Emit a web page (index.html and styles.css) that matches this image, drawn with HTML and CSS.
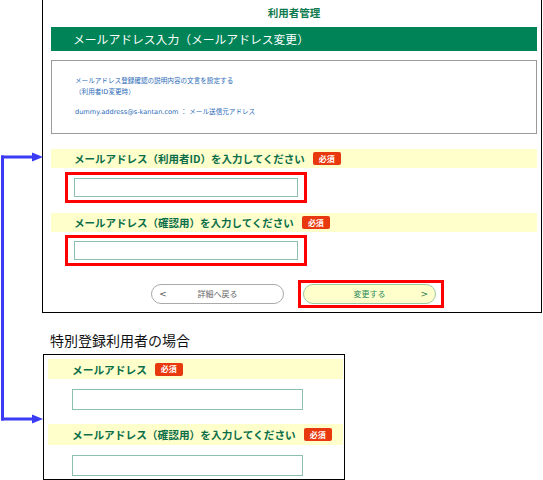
FILE: index.html
```html
<!DOCTYPE html>
<html lang="ja">
<head>
<meta charset="utf-8">
<title>利用者管理</title>
<link rel="stylesheet" href="styles.css">
</head>
<body>
<div class="page">
  <section class="panel main">
    <h1 class="page-title">利用者管理</h1>
    <div class="section-bar">メールアドレス入力（メールアドレス変更）</div>
    <div class="info">
      <p class="info-line">メールアドレス登録確認の説明内容の文言を設定する<br>（利用者ID変更時）</p>
      <p class="info-line info-gap">dummy.address@s-kantan.com ： メール送信元アドレス</p>
    </div>
    <div class="field-label">メールアドレス（利用者ID）を入力してください<span class="req">必須</span></div>
    <div class="hl hl-input"><input class="text-input" type="text"></div>
    <div class="field-label label-second">メールアドレス（確認用）を入力してください<span class="req">必須</span></div>
    <div class="hl hl-input hl-second"><input class="text-input" type="text"></div>
    <div class="actions">
      <button class="btn btn-back" type="button"><span class="chev">&lt;</span><span>詳細へ戻る</span><span class="chev"></span></button>
      <div class="hl hl-btn">
        <button class="btn btn-submit" type="button"><span class="chev"></span><span>変更する</span><span class="chev">&gt;</span></button>
      </div>
    </div>
  </section>

  <p class="case-title">特別登録利用者の場合</p>

  <section class="panel sub">
    <div class="field-label sub-label">メールアドレス<span class="req">必須</span></div>
    <input class="text-input sub-input" type="text">
    <div class="field-label sub-label sub-label-second">メールアドレス（確認用）を入力してください<span class="req">必須</span></div>
    <input class="text-input sub-input" type="text">
  </section>

  <svg class="connector" width="46" height="430" viewBox="0 0 46 430">
    <rect x="1" y="155.5" width="3" height="265" fill="#3b3bf6"/>
    <rect x="1" y="155.5" width="33" height="3" fill="#3b3bf6"/>
    <polygon points="32,152.5 43,157 32,161.5" fill="#3b3bf6"/>
    <rect x="1" y="417.5" width="33" height="3" fill="#3b3bf6"/>
    <polygon points="32,414.5 43,419 32,423.5" fill="#3b3bf6"/>
  </svg>
</div>
</body>
</html>
```
FILE: styles.css
```css
html, body {
  margin: 0;
  padding: 0;
  background: #fff;
}

body {
  font-family: "Noto Sans CJK JP", "Noto Sans", sans-serif;
}

.page {
  position: relative;
  width: 543px;
  height: 480px;
  overflow: hidden;
}

.main {
  margin-left: 42px;
  width: 500px;
  height: 313px;
  box-sizing: border-box;
  border: 1px solid #000;
  border-top: none;
  padding: 0 4px 0 8px;
}

.page-title {
  margin: 0;
  height: 27px;
  line-height: 25px;
  text-align: center;
  font-size: 10.5px;
  font-weight: bold;
  color: #0d7a4e;
}

.section-bar {
  height: 24px;
  line-height: 24px;
  background: #008457;
  color: #fff;
  font-size: 11.8px;
  padding-left: 22px;
}

.info {
  margin-top: 9px;
  height: 74px;
  box-sizing: border-box;
  border: 1px solid #9a9a9a;
  padding: 15px 0 0 23px;
}

.info-line {
  margin: 0;
  font-family: "DejaVu Sans", "Noto Sans CJK JP", sans-serif;
  font-size: 6.6px;
  line-height: 11px;
  color: #2c6cb8;
}

.info-gap {
  margin-top: 8.5px;
}

.field-label {
  margin-top: 15px;
  height: 19px;
  background: #ffffcc;
  padding-left: 23px;
  display: flex;
  align-items: center;
  font-size: 10.5px;
  font-weight: bold;
  color: #0b6e48;
  white-space: nowrap;
}

.label-second {
  margin-top: 10px;
}

.req {
  display: inline-flex;
  align-items: center;
  justify-content: center;
  margin-left: 8px;
  width: 28px;
  height: 13px;
  border-radius: 2px;
  background: #e8380d;
  color: #fff;
  font-size: 8px;
  font-weight: bold;
  line-height: 1;
}

.hl {
  box-sizing: border-box;
  border: 3px solid #ff0000;
}

.hl-input {
  margin: 4px 0 0 14px;
  width: 242px;
  height: 31px;
  padding: 3px 6px;
}

.hl-second {
  margin-top: 3px;
}

.text-input {
  display: block;
  box-sizing: border-box;
  margin: 0;
  padding: 0;
  width: 224px;
  height: 19px;
  border: 1px solid #8dbfb1;
  background: #fff;
  outline: none;
}

.actions {
  margin-top: 14px;
  padding-left: 100px;
  display: flex;
  align-items: center;
}

.btn {
  box-sizing: border-box;
  width: 133px;
  height: 20px;
  margin: 0;
  padding: 0 7px;
  border-radius: 10px;
  display: flex;
  align-items: center;
  justify-content: space-between;
  font-family: "Noto Sans CJK JP", sans-serif;
  font-size: 8px;
  line-height: 1;
}

.chev {
  width: 8px;
  font-size: 9px;
  font-family: "DejaVu Sans", sans-serif;
}

.btn-back {
  margin-right: 14px;
  background: #fff;
  border: 1px solid #aaaaaa;
  color: #666;
}

.btn-back .chev {
  color: #555;
}

.hl-btn {
  width: 146px;
  height: 28px;
  padding: 1px 5px 1px 2px;
}

.btn-submit {
  background: #ffffcc;
  border: 1px solid #9ccaa2;
  color: #2b8a5a;
}

.btn-submit .chev {
  text-align: right;
  color: #1f7a50;
}

.case-title {
  margin: 17px 0 0 50px;
  font-size: 14px;
  line-height: 20px;
  color: #111;
}

.sub {
  margin: 4px 0 0 43px;
  width: 302px;
  height: 126px;
  box-sizing: border-box;
  border: 1px solid #000;
  padding: 4px 1px 0 4px;
}

.sub-label {
  margin-top: 0;
  height: 20px;
  padding-left: 24px;
  font-size: 10.7px;
}

.sub-label-second {
  margin-top: 14px;
  height: 21px;
}

.sub-input {
  margin: 10px 0 0 24px;
  width: 231px;
  height: 21px;
}

.connector {
  position: absolute;
  left: 0;
  top: 0;
  pointer-events: none;
}
```
